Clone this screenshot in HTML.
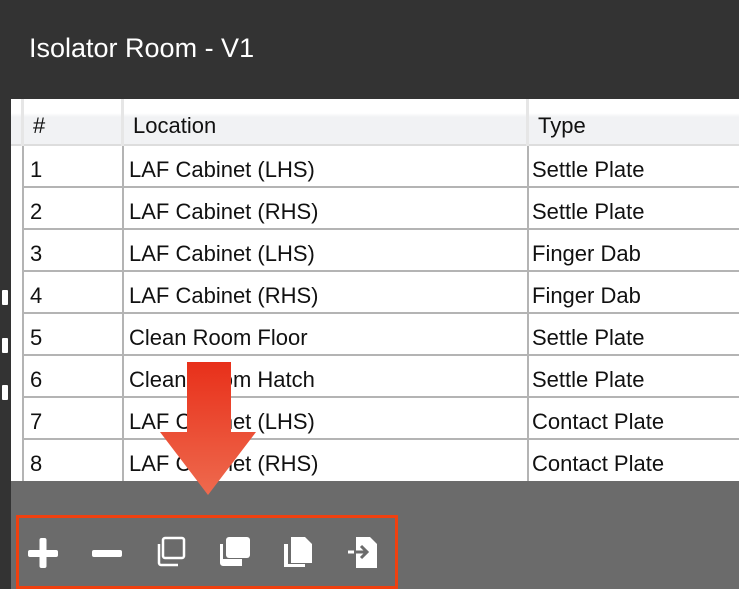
<!DOCTYPE html>
<html><head><style>
*{margin:0;padding:0;box-sizing:border-box}
body{width:739px;height:589px;background:#333;position:relative;overflow:hidden;font-family:"Liberation Sans",sans-serif}
.title{position:absolute;left:29px;top:33px;color:#fff;font-size:27px}
.tbl{position:absolute;left:11px;top:99px;width:728px;height:382px;background:#fff}
.hdr{position:absolute;left:0;top:0;width:728px;height:47px;background:linear-gradient(#fff 0,#fff 14px,#f1f2f4 18px,#f1f2f4 100%);border-bottom:2px solid #ddd}
.hc{position:absolute;top:14px;font-size:22px;color:#111}
.row{position:absolute;left:11px;width:717px;height:42px;border-bottom:2px solid #b4b4b4}
.c{position:absolute;top:11px;font-size:22px;color:#111}
.vl{position:absolute;top:47px;width:2px;height:335px;background:#b4b4b4}
.vh{position:absolute;top:0;width:3px;height:47px;background:#e6e6e6}
.bot{position:absolute;left:11px;top:481px;width:728px;height:108px;background:#6b6b6b}
.box{position:absolute;left:16px;top:515px;width:382px;height:74px;border:3px solid #f0400f}
.mark{position:absolute;left:2px;width:6px;height:15px;background:#fff;border-radius:1px}
</style></head><body>
<div class="title">Isolator Room - V1</div>
<div class="mark" style="top:290px"></div>
<div class="mark" style="top:338px"></div>
<div class="mark" style="top:385px"></div>
<div class="tbl">
<div class="hdr"></div>
<div class="vh" style="left:10px"></div><div class="vh" style="left:110px"></div><div class="vh" style="left:515px"></div>
<div class="hc" style="left:22px">#</div>
<div class="hc" style="left:122px">Location</div>
<div class="hc" style="left:527px">Type</div>
<div class="vl" style="left:11px"></div><div class="vl" style="left:111px"></div><div class="vl" style="left:516px"></div>
<div class="row" style="top:47px"><span class="c" style="left:8px">1</span><span class="c" style="left:107px">LAF Cabinet (LHS)</span><span class="c" style="left:510px">Settle Plate</span></div>
<div class="row" style="top:89px"><span class="c" style="left:8px">2</span><span class="c" style="left:107px">LAF Cabinet (RHS)</span><span class="c" style="left:510px">Settle Plate</span></div>
<div class="row" style="top:131px"><span class="c" style="left:8px">3</span><span class="c" style="left:107px">LAF Cabinet (LHS)</span><span class="c" style="left:510px">Finger Dab</span></div>
<div class="row" style="top:173px"><span class="c" style="left:8px">4</span><span class="c" style="left:107px">LAF Cabinet (RHS)</span><span class="c" style="left:510px">Finger Dab</span></div>
<div class="row" style="top:215px"><span class="c" style="left:8px">5</span><span class="c" style="left:107px">Clean Room Floor</span><span class="c" style="left:510px">Settle Plate</span></div>
<div class="row" style="top:257px"><span class="c" style="left:8px">6</span><span class="c" style="left:107px">Clean Room Hatch</span><span class="c" style="left:510px">Settle Plate</span></div>
<div class="row" style="top:299px"><span class="c" style="left:8px">7</span><span class="c" style="left:107px">LAF Cabinet (LHS)</span><span class="c" style="left:510px">Contact Plate</span></div>
<div class="row" style="top:341px;border-bottom:none"><span class="c" style="left:8px">8</span><span class="c" style="left:107px">LAF Cabinet (RHS)</span><span class="c" style="left:510px">Contact Plate</span></div>
</div>
<div class="bot"></div>
<svg style="position:absolute;left:0;top:0" width="739" height="589">
<defs><linearGradient id="g" x1="0" y1="362" x2="0" y2="495" gradientUnits="userSpaceOnUse"><stop offset="0" stop-color="#e8301a"/><stop offset="1" stop-color="#ee6a4e"/></linearGradient></defs>
<path d="M187 362H231V432H256L208 495L160 432H187Z" fill="url(#g)"/>
<g fill="#fff">
<rect x="28" y="550" width="30" height="7" rx="2"/><rect x="39.5" y="538" width="7" height="30" rx="2"/>
<rect x="92" y="550" width="30" height="7" rx="2"/>
</g>
<g fill="none" stroke="#fff" stroke-width="2.5">
<rect x="163" y="538" width="21" height="20" rx="2"/>
<path d="M159 544v19a2 2 0 0 0 2 2h17"/>
</g>
<g fill="#fff">
<rect x="226" y="537" width="24" height="21" rx="3"/>
<path d="M220 544h3v15h19v7h-19a3 3 0 0 1-3-3z"/>
<path d="M291 537h14l7 7v19h-21z"/>
<path d="M284 544h4v20h17v3h-21z"/>
<path d="M356 537h14l7 7v24h-21z"/>
</g>
<path d="M348 552h18M361 546l6 6-6 6" stroke="#6b6b6b" stroke-width="3" fill="none"/>
<path d="M348 552h6" stroke="#fff" stroke-width="3"/>
</svg>
<div class="box"></div>
</body></html>
